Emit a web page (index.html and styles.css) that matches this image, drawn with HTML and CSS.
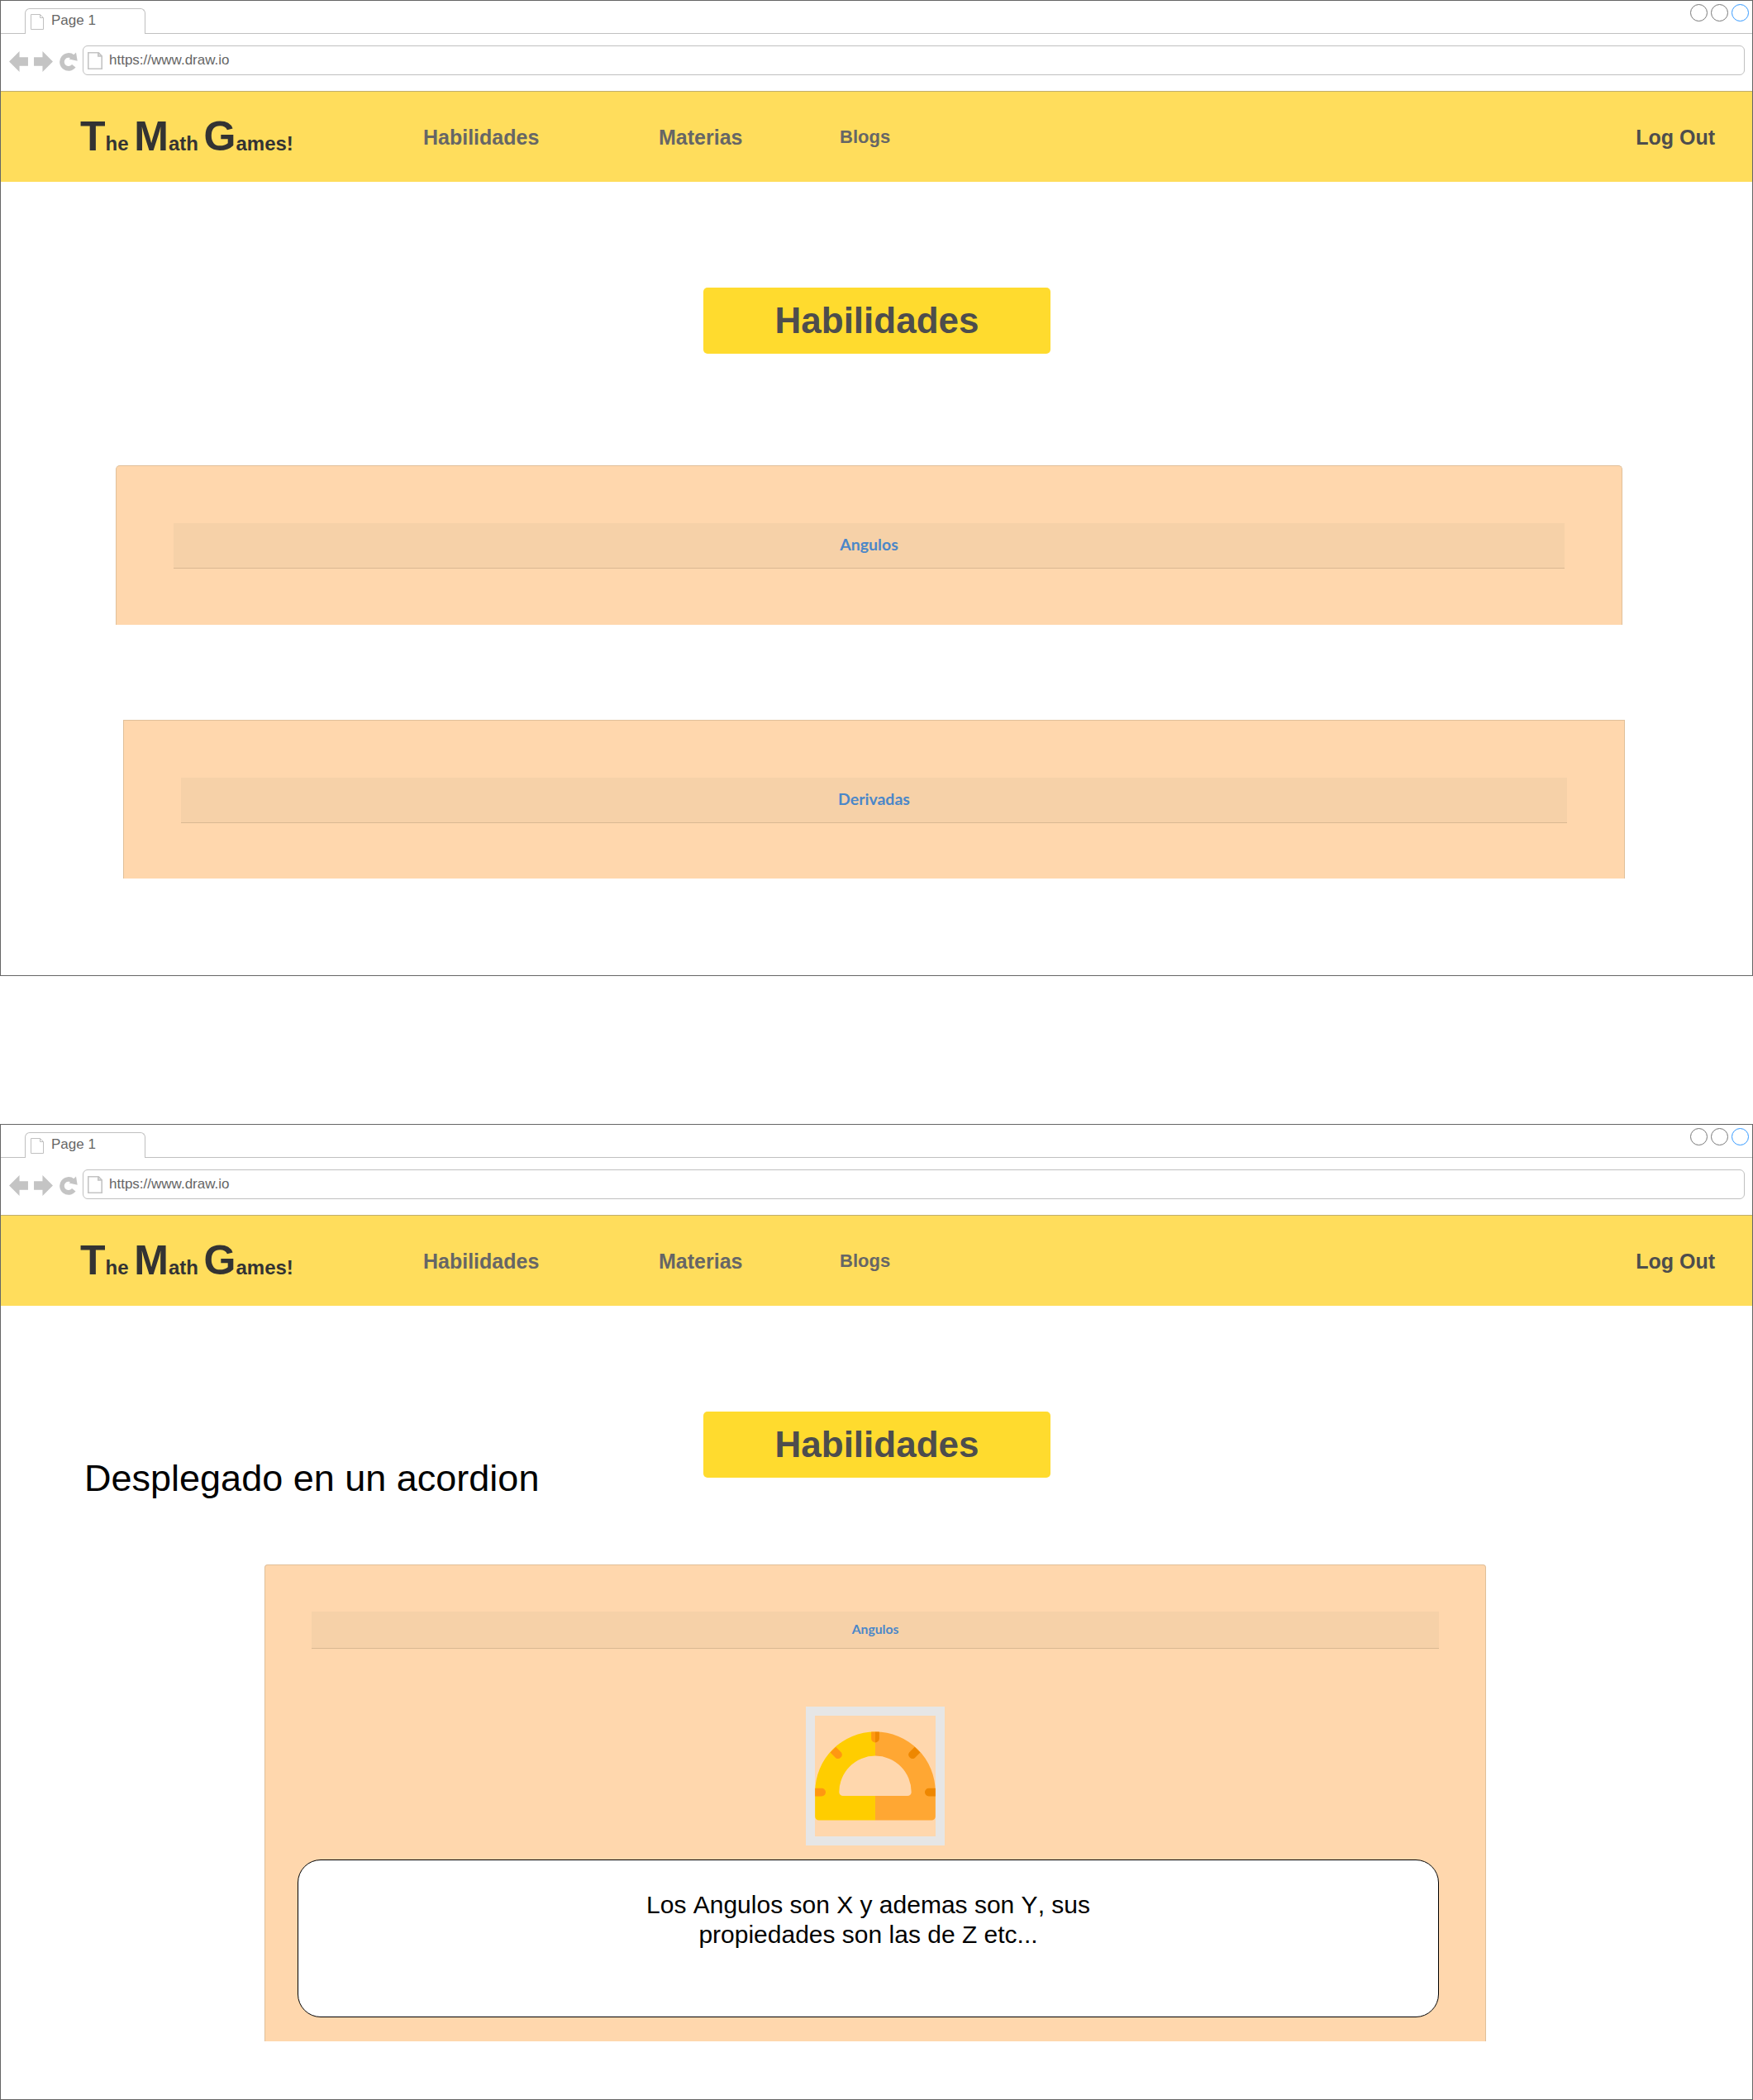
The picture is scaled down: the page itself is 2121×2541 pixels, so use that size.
FILE: index.html
```html
<!DOCTYPE html>
<html lang="es">
<head>
<meta charset="utf-8">
<title>The Math Games!</title>
<link rel="stylesheet" href="styles.css">
</head>
<body>
<svg class="defs" width="0" height="0">
  <symbol id="page" viewBox="0 0 16 19"><path d="M.5.5h11l4 4v14H.5zM11.5.5v4h4" fill="none" stroke="currentColor"/></symbol>
  <symbol id="back" viewBox="0 0 22 24"><path d="M0 12 12 0v7h10v10H12v7z" fill="currentColor"/></symbol>
  <symbol id="reload" viewBox="0 0 22 22"><path d="M17.3 16.3A8 8 0 1 1 16 5.2" fill="none" stroke="currentColor" stroke-width="5.6"/><path d="M20 0l1.700 10.200L11.500 8z" fill="currentColor"/></symbol>
</svg>

<section class="window">
  <header class="tabs">
    <div class="tab"><svg class="tab-icon"><use href="#page"/></svg>Page 1</div>
    <div class="controls"><i></i><i></i><i class="active"></i></div>
  </header>
  <div class="toolbar">
    <svg class="arrow"><use href="#back"/></svg>
    <svg class="arrow forward"><use href="#back"/></svg>
    <svg class="reload"><use href="#reload"/></svg>
    <div class="address"><svg class="address-icon"><use href="#page"/></svg>https://www.draw.io</div>
  </div>
  <nav class="nav">
    <div class="logo"><b>T</b>he <b>M</b>ath <b>G</b>ames!</div>
    <a>Habilidades</a><a>Materias</a><a class="small">Blogs</a><a class="logout">Log Out</a>
  </nav>
  <main>
    <div class="heading"><h1>Habilidades</h1></div>
    <article class="card first"><h2>Angulos</h2></article>
    <article class="card second"><h2>Derivadas</h2></article>
  </main>
</section>

<section class="window">
  <header class="tabs">
    <div class="tab"><svg class="tab-icon"><use href="#page"/></svg>Page 1</div>
    <div class="controls"><i></i><i></i><i class="active"></i></div>
  </header>
  <div class="toolbar">
    <svg class="arrow"><use href="#back"/></svg>
    <svg class="arrow forward"><use href="#back"/></svg>
    <svg class="reload"><use href="#reload"/></svg>
    <div class="address"><svg class="address-icon"><use href="#page"/></svg>https://www.draw.io</div>
  </div>
  <nav class="nav">
    <div class="logo"><b>T</b>he <b>M</b>ath <b>G</b>ames!</div>
    <a>Habilidades</a><a>Materias</a><a class="small">Blogs</a><a class="logout">Log Out</a>
  </nav>
  <main>
    <div class="heading"><p class="note">Desplegado en un acordion</p><h1>Habilidades</h1></div>
    <article class="card open">
      <h2>Angulos</h2>
      <svg class="picture" viewBox="81 407 435 436">
        <path d="M298.500 465A217.500 218 0 0 0 81 683V771a14 14 0 0 0 14 14H298.500V697H182a14 14 0 0 1-14-14A130.500 131 0 0 1 298.500 552z" fill="#ffcd00"/>
        <path d="M298.500 465A217.500 218 0 0 1 516 683V771a14 14 0 0 1-14 14H298.500V697H415a14 14 0 0 0 14-14A130.500 131 0 0 0 298.500 552z" fill="#ffa733"/>
        <path d="M81 669h24a14.500 14.500 0 0 1 0 29H81zM136 540l20-20 20 20a14.500 14.500 0 0 1-20 20zM284 465h14.500v39a14.500 14.500 0 0 1-14.500-14.500z" fill="#ff9811"/>
        <path d="M516 669h-24a14.500 14.500 0 0 0 0 29h24zM461 540l-20-20-20 20a14.500 14.500 0 0 0 20 20zM313 465h-14.500v39a14.500 14.500 0 0 0 14.500-14.500z" fill="#ee8700"/>
      </svg>
      <div class="description">Los Angulos son X y ademas son Y, sus<br>propiedades son las de Z etc...</div>
    </article>
  </main>
</section>
</body>
</html>
```
FILE: styles.css
```css
* { box-sizing: border-box; }
body { margin: 0; background: #fff; font-family: "Liberation Sans", Arial, sans-serif; color: #666; }
svg { display: block; flex: none; }
.defs { position: absolute; }
h1, h2, p { margin: 0; }

.window { height: 1181px; border: 1px solid #666; overflow: hidden; }
.window + .window { margin-top: 179px; }

.tabs { height: 40px; display: flex; justify-content: space-between; box-shadow: inset 0 -1px #c0c0c0; }
.tab { width: 146px; height: 31px; margin: 9px 0 0 29px; padding: 0 0 2px 6px; display: flex; align-items: center; gap: 9px; background: #fff; border: 1px solid #c0c0c0; border-bottom: 0; border-radius: 6px 6px 0 0; font-size: 17px; }
.tab-icon { width: 16px; height: 19px; margin-top: 3px; color: #c0c0c0; }
.controls { display: flex; gap: 4px; padding: 4px 4px 0 0; }
.controls i { width: 21px; height: 21px; border: 1.400px solid #777; border-radius: 50%; }
.controls .active { border-color: #39f; }

.toolbar { height: 69px; display: flex; align-items: flex-start; padding: 14px 9px 0 10px; color: #c4c4c4; }
.arrow { width: 23px; height: 25px; margin: 7px 7px 0 0; }
.forward { transform: scaleX(-1); }
.reload { width: 22px; height: 23px; margin: 8px 6px 0 1px; }
.address { flex: 1; height: 36px; display: flex; align-items: center; gap: 8px; padding: 0 0 1px 5px; border: 1px solid #c0c0c0; border-radius: 6px; color: #666; font-size: 17px; }
.address-icon { width: 18px; height: 21px; margin-top: 2px; color: #c4c4c4; stroke-width: 1.6; }

.nav { height: 110px; margin: 0 -1px; padding: 1px 45px 0 96px; display: grid; grid-template-columns: 415px 285px 219px 1fr auto; align-items: center; background: #ffdd5c; border: 1px solid #c0ae6c; border-width: 1px 1px 0; font-size: 25px; line-height: 30px; font-weight: bold; }
.logo { padding-top: 7px; color: #333; font-size: 24px; line-height: 58px; }
.logo b { font-size: 50px; }
.small { font-size: 22px; }
.logout { color: #4d4d4d; }

.heading { height: 80px; margin-top: 128px; display: grid; grid-template-columns: 850px 420px; }
h1 { grid-column: 2; grid-row: 1; height: 80px; background: #ffdb2e; border-radius: 5px; color: #4d4d4d; font-size: 44px; line-height: 80px; text-align: center; }
.note { grid-column: 1; grid-row: 1; margin-top: 55px; padding-left: 101px; font-size: 45px; line-height: 52px; color: #000; }

.card { background: #ffd7ad; border: 1px solid #e0c09a; border-bottom: 0; }
.card h2 { height: 55px; background: #f6d1a8; border-bottom: 1px solid #d9b892; color: #4b87c8; font: bold 19.500px/52px Lato, sans-serif; text-align: center; }
.first { width: 1823px; height: 193px; margin: 135px 0 0 139px; padding: 69px 69px 0; border-radius: 5px 5px 0 0; }
.second { width: 1817px; height: 192px; margin: 115px 0 0 148px; padding: 69px 69px 0; }
.open { width: 1478px; height: 577px; margin: 105px 0 0 319px; padding: 56px 56px 0; border-radius: 4px 4px 0 0; }
.card.open h2 { height: 45px; font-size: 15.700px; line-height: 42px; }
.picture { width: 168px; height: 168px; margin: 70px 0 0 598px; border: 11px solid #e6e6e6; }
.description { width: 1381px; height: 191px; margin: 17px 0 0 -17px; padding-top: 36px; background: #fff; border: 1px solid #000; border-radius: 28px; color: #000; font-size: 30px; line-height: 36px; text-align: center; font-kerning: none; }
```
